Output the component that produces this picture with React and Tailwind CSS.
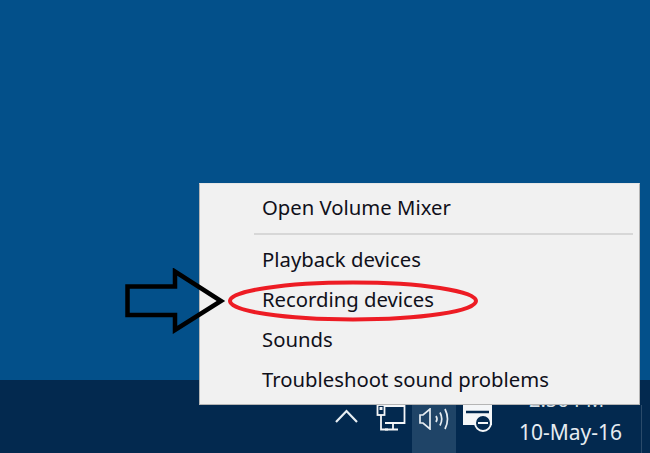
const menuFont = { fontFamily: '"Noto Sans", "Open Sans", sans-serif' };

function TrayIcons() {
  return (
    <div className="flex h-full items-start">
      {/* chevron */}
      <svg width="30" height="20" viewBox="0 0 30 20" className="ml-[331px] mt-[25px] shrink-0" fill="none" stroke="#e8eef3" strokeWidth="2.2">
        <path d="M5 17 L15.5 6 L26 17" />
      </svg>
      {/* network */}
      <svg width="32" height="26" viewBox="0 0 32 26" className="ml-[15px] mt-[25px] shrink-0" fill="none" stroke="#f4f6f8" strokeWidth="1.8">
        <path d="M9 1 H28.5 V18 H9" />
        <path d="M17 18 V24 M9 24.5 H22" />
        <path d="M5 10 V24.5 H12" />
        <rect x="1.5" y="0" width="7" height="10" />
        <rect x="3.5" y="2" width="3" height="3" fill="#f4f6f8" stroke="none" />
      </svg>
      <div className="ml-[4px] flex h-full w-[44px] shrink-0 justify-center bg-[#1f4467] pt-[28px]">
        {/* speaker */}
        <svg width="30" height="22" viewBox="0 0 30 22" fill="none" stroke="#e6ecf1" strokeWidth="1.7">
          <path d="M1 7 H4 L11 1 V21 L4 15 H1 Z" />
          <path d="M17 8 Q19 11 17 14" />
          <path d="M21 4.5 Q24.5 11 21 17.5" />
          <path d="M26 1 Q31 11 26 21" />
        </svg>
      </div>
      {/* action center */}
      <svg width="30" height="28" viewBox="0 0 30 28" className="ml-[7px] mt-[25px] shrink-0">
        <path d="M0 0 H29 V20 H0 Z" fill="#f4f6f8" />
        <path d="M3 7 H26" stroke="#03294f" strokeWidth="2.5" />
        <circle cx="20" cy="18" r="8" fill="#03294f" stroke="#f4f6f8" strokeWidth="2" />
        <path d="M15 18 H25" stroke="#f4f6f8" strokeWidth="2" />
      </svg>
      <div className="ml-[26px] flex flex-col items-start">
        <span className="mt-[10px] ml-[10px] h-[20px] text-[20px] leading-[20px] text-[#d8e0e7]" style={menuFont}>
          2:56 PM
        </span>
        <span className="mt-[12px] text-[21px] leading-none text-[#e6ecf1]" style={menuFont}>
          10-May-16
        </span>
      </div>
      <div className="ml-auto mr-[8px] mt-[25px] h-[48px] w-px shrink-0 bg-[#2a4a6a]" />
    </div>
  );
}

function MenuItem({ children }) {
  return (
    <div className="pl-[62px] text-[20.3px] leading-[40px] text-[#10101a]" style={menuFont}>
      {children}
    </div>
  );
}

export default function App() {
  return (
    <div className="relative flex h-[453px] w-[650px] flex-col overflow-hidden bg-[#03508a]">
      <div className="flex-1" />
      <div className="h-[73px] bg-[#03294f]">
        <TrayIcons />
      </div>

      {/* context menu */}
      <div className="absolute left-[199px] top-[183px] h-[222px] w-[441px] border border-[#b5b5b5] border-t-[#e6e6e6] bg-[#f1f1f1] pt-[3px]">
        <MenuItem>Open Volume Mixer</MenuItem>
        <div className="ml-[54px] mr-[6px] mt-[6px] mb-[4px] h-[2px] bg-[#d7d7d7]" />
        <MenuItem>Playback devices</MenuItem>
        <MenuItem>Recording devices</MenuItem>
        <MenuItem>Sounds</MenuItem>
        <MenuItem>Troubleshoot sound problems</MenuItem>
      </div>

      {/* arrow */}
      <svg className="absolute left-[124px] top-[268px]" width="102" height="66" viewBox="0 0 102 66" fill="none">
        <path d="M3.5 18.5 H51 V3.5 L97 33 L51 62 V47 H3.5 Z" stroke="#000" strokeWidth="4.5" strokeLinejoin="miter" />
      </svg>

      {/* ellipse */}
      <svg className="absolute left-[226px] top-[276px]" width="256" height="50" viewBox="0 0 256 50" fill="none">
        <ellipse cx="127" cy="25" rx="123" ry="18.5" stroke="#ed1c24" strokeWidth="4" />
      </svg>
    </div>
  );
}
